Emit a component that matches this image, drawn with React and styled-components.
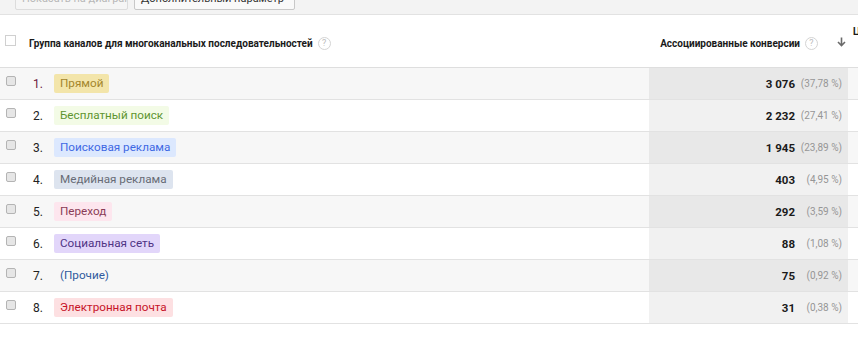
import React from 'react'
import styled, { createGlobalStyle } from 'styled-components'

const GlobalStyle = createGlobalStyle`
    html, body {
        margin: 0;
        padding: 0;
        background: #fff;
        font-family: Roboto, "Liberation Sans", Arial, sans-serif;
        color: #222;
    }
`

const rows = [
    { name: 'Прямой', bg: '#f3e5aa', fg: '#a4862c', value: '3\u00a0076', pct: '(37,78\u00a0%)' },
    { name: 'Бесплатный поиск', bg: '#f3fbe6', fg: '#5e9530', value: '2\u00a0232', pct: '(27,41\u00a0%)' },
    { name: 'Поисковая реклама', bg: '#dce8fe', fg: '#3f68e4', value: '1\u00a0945', pct: '(23,89\u00a0%)' },
    { name: 'Медийная реклама', bg: '#dde4ef', fg: '#686c76', value: '403', pct: '(4,95\u00a0%)' },
    { name: 'Переход', bg: '#fde6ee', fg: '#8a3c56', value: '292', pct: '(3,59\u00a0%)' },
    { name: 'Социальная сеть', bg: '#e2d6fa', fg: '#4f3484', value: '88', pct: '(1,08\u00a0%)' },
    { name: '(Прочие)', bg: 'transparent', fg: '#2f5a9e', value: '75', pct: '(0,92\u00a0%)' },
    { name: 'Электронная почта', bg: '#fde0e2', fg: '#c71428', value: '31', pct: '(0,38\u00a0%)' },
]

const Page = styled.div`
    width: 858px;
    height: 338px;
    overflow: hidden;
`

const Toolbar = styled.div`
    height: 10px;
    background: #f3f3f3;
    border-bottom: 1px solid #e2e2e2;
    display: flex;
    align-items: flex-end;
    gap: 6px;
    padding: 0 0 4px 15px;
    box-sizing: content-box;
    overflow: hidden;
`

const ToolButton = styled.div`
    flex: none;
    width: ${p => p.$w}px;
    height: 22px;
    line-height: 20px;
    box-sizing: border-box;
    padding: 0 6px;
    border: 1px solid ${p => (p.$disabled ? '#dcdcdc' : '#c8c8c8')};
    border-radius: 2px;
    background: ${p => (p.$disabled ? '#f5f5f5' : '#f9f9f9')};
    color: ${p => (p.$disabled ? '#b8b8b8' : '#333')};
    font-size: 11px;
    white-space: nowrap;
    overflow: hidden;
`

const Grid = styled.div`
    display: grid;
    grid-template-columns: 26px 22px 1fr 199px 10px;
`

const Head = styled(Grid)`
    height: 52px;
    border-bottom: 1px solid #dedede;
`

const HeadCheck = styled.div`
    display: flex;
    align-items: center;
    padding-left: 5px;
`

const HeadBox = styled.span`
    width: 11px;
    height: 11px;
    box-sizing: border-box;
    border: 1px solid #d0d0d0;
    background: #fff;
    margin-top: -1px;
`

const HeadTitle = styled.div`
    grid-column: 2 / 4;
    display: flex;
    align-items: center;
    gap: 5px;
    padding: 5px 0 0 3px;
    font-size: 10px;
    font-weight: 700;
    color: #1a1a1a;
`

const HeadMetric = styled.div`
    display: flex;
    align-items: center;
    justify-content: flex-end;
    gap: 5px;
    padding: 5px 2px 0 0;
    font-size: 10px;
    font-weight: 700;
    color: #1a1a1a;
`

const Help = styled.span`
    width: 13px;
    height: 13px;
    box-sizing: border-box;
    border: 1px solid #d4d4d4;
    border-radius: 50%;
    color: #bdbdbd;
    font-size: 9px;
    font-weight: 400;
    line-height: 11px;
    text-align: center;
`

const SortArrow = styled.svg`
    margin-left: 14px;
    margin-top: -3px;
`

const HeadTail = styled.div`
    overflow: hidden;
    white-space: nowrap;
    padding: 11px 0 0 5px;
    font-size: 10px;
    font-weight: 700;
    color: #1a1a1a;
`

const Row = styled(Grid)`
    height: 31px;
    border-bottom: 1px solid #e2e2e2;
    background: ${p => (p.$odd ? '#f7f7f7' : '#fff')};
`

const CheckCell = styled.div`
    padding: 8px 0 0 6px;
`

const RowBox = styled.span`
    display: block;
    width: 10px;
    height: 10px;
    box-sizing: border-box;
    border: 1px solid #b4b4b4;
    border-radius: 2px;
    background: #e6e6e6;
`

const NumCell = styled.div`
    display: flex;
    align-items: center;
    padding-left: 7px;
    font-size: 12px;
    color: ${p => (p.$active ? '#6d1640' : '#222')};
`

const NameCell = styled.div`
    display: flex;
    align-items: center;
    padding-left: 6px;
`

const Chip = styled.span`
    height: 19px;
    line-height: 19px;
    padding: 0 6px;
    border-radius: 2px;
    font-size: 11.7px;
    background: ${p => p.$bg};
    color: ${p => p.$fg};
`

const MetricCell = styled.div`
    display: flex;
    align-items: center;
    justify-content: flex-end;
    padding-right: 6px;
    background: ${p => (p.$odd ? '#e8e8e8' : '#f1f1f1')};
`

const Value = styled.span`
    font-size: 11.5px;
    font-weight: 700;
    color: #1a1a1a;
`

const Pct = styled.span`
    display: inline-block;
    min-width: 44px;
    margin-left: 3px;
    text-align: right;
    font-size: 10px;
    color: #969696;
`

export default function App() {
    return (
        <Page>
            <GlobalStyle />
            <Toolbar>
                <ToolButton $w={113} $disabled>Показать на диаграмме</ToolButton>
                <ToolButton $w={161}>Дополнительный параметр</ToolButton>
            </Toolbar>
            <Head>
                <HeadCheck><HeadBox /></HeadCheck>
                <HeadTitle>
                    Группа каналов для многоканальных последовательностей
                    <Help>?</Help>
                </HeadTitle>
                <HeadMetric>
                    Ассоциированные конверсии
                    <Help>?</Help>
                    <SortArrow width="9" height="10" viewBox="0 0 9 10">
                        <path d="M4.5 0.5 V8.5 M1 5 L4.5 8.5 L8 5" stroke="#6a6a6a" strokeWidth="1.6" fill="none" />
                    </SortArrow>
                </HeadMetric>
                <HeadTail>Ценность</HeadTail>
            </Head>
            {rows.map((r, i) => (
                <Row key={r.name} $odd={i % 2 === 0}>
                    <CheckCell><RowBox /></CheckCell>
                    <NumCell $active={i === 0}>{i + 1}.</NumCell>
                    <NameCell>
                        <Chip $bg={r.bg} $fg={r.fg}>{r.name}</Chip>
                    </NameCell>
                    <MetricCell $odd={i % 2 === 0}>
                        <Value>{r.value}</Value>
                        <Pct>{r.pct}</Pct>
                    </MetricCell>
                    <div />
                </Row>
            ))}
        </Page>
    )
}
